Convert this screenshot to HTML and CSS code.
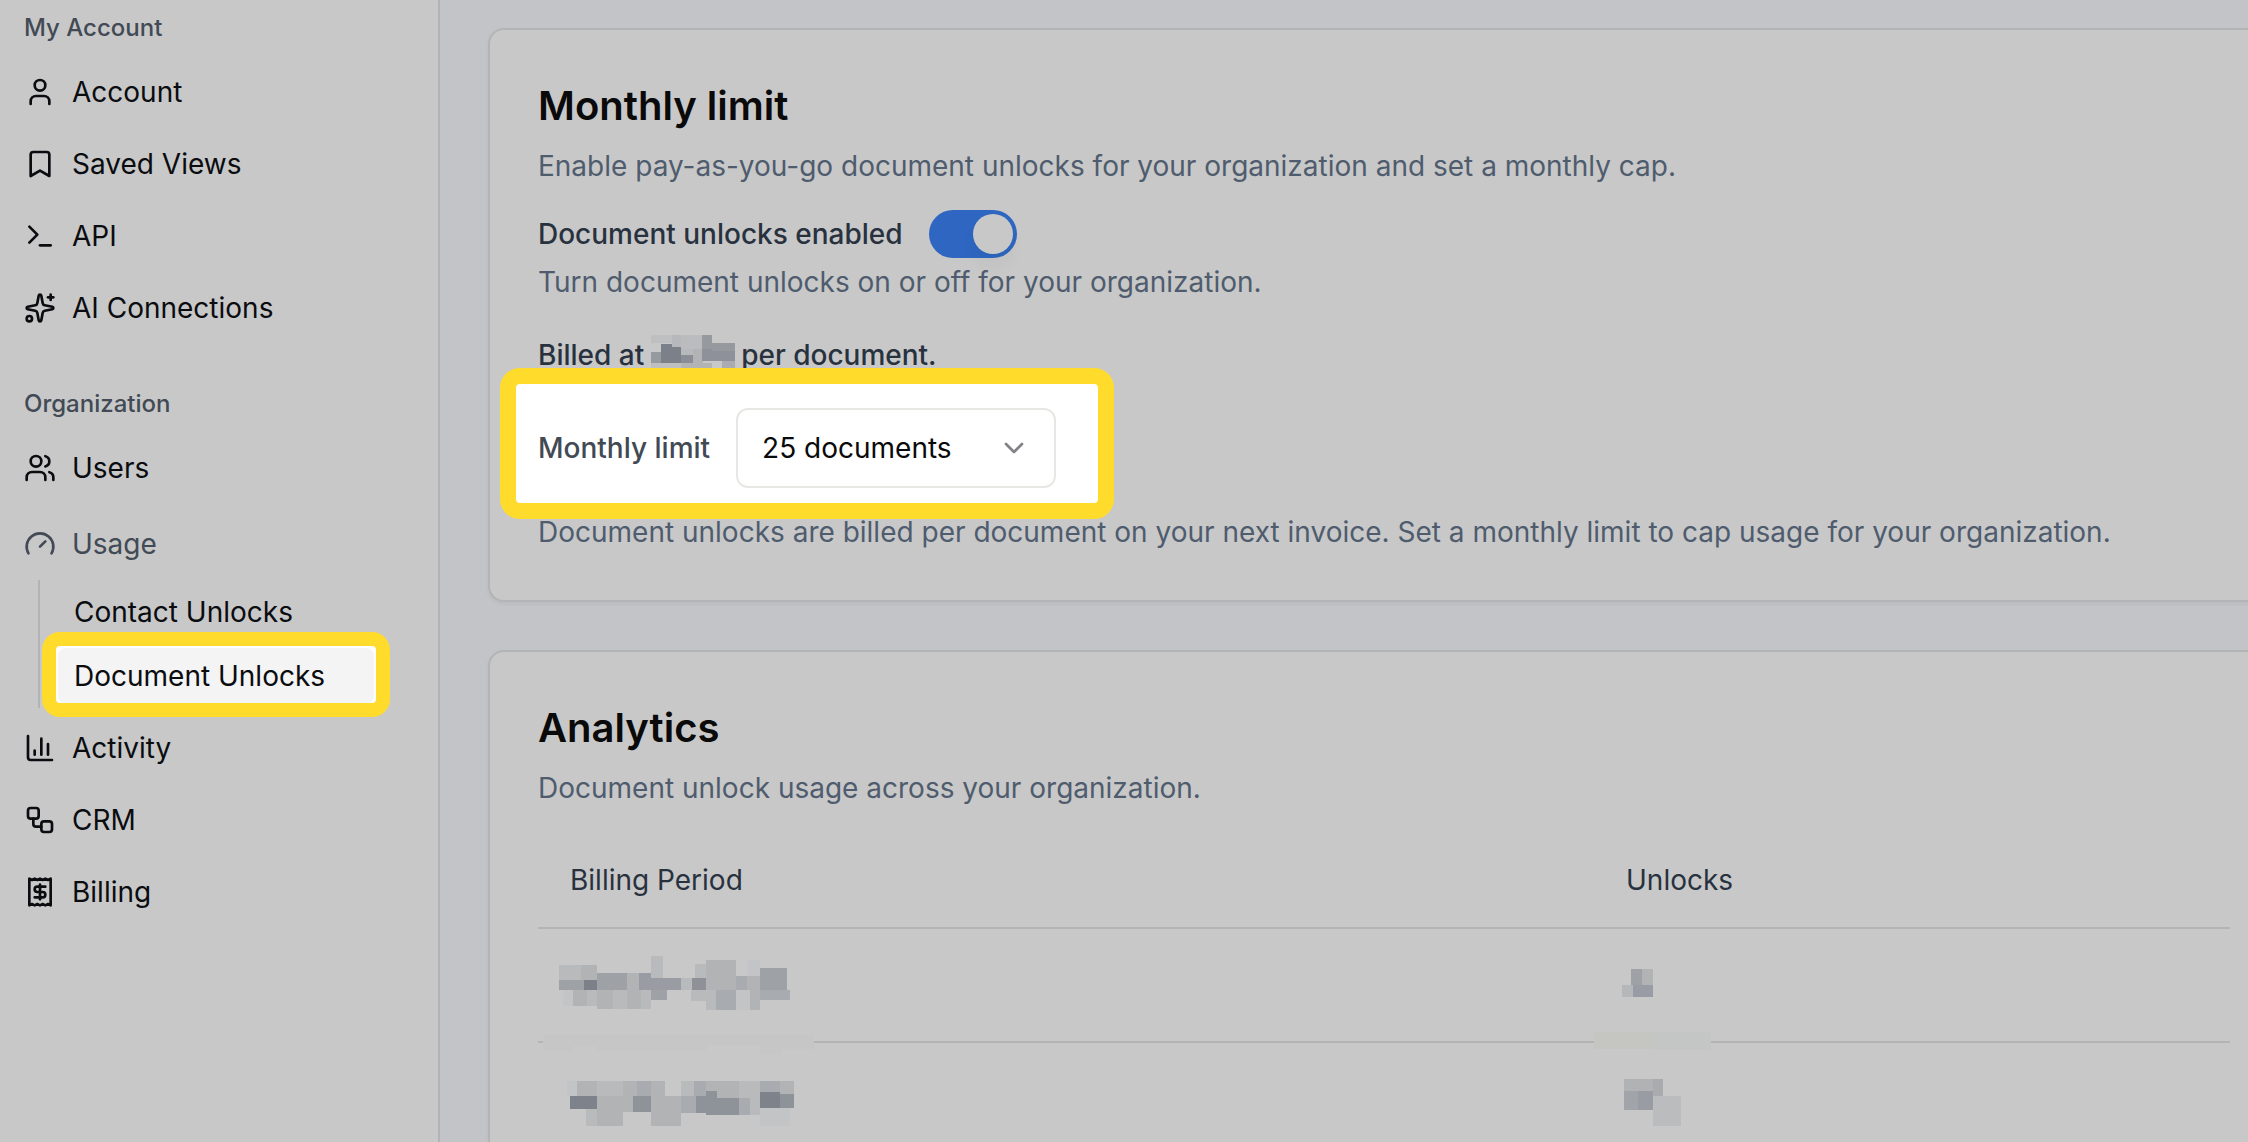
FILE: index.html
```html
<!DOCTYPE html>
<html lang="en">
<head>
    <meta charset="UTF-8">
    <meta name="viewport" content="width=device-width, initial-scale=1.0">
    <title>Document Unlocks</title>
    <link rel="stylesheet" href="styles.css">
</head>
<body>
    <div class="layout">
        <nav class="sidebar">
            <div class="group">
                <h2 class="group-label">My Account</h2>
                <ul class="menu">
                    <li><a class="item" href="#account">
                        <svg class="icon" viewBox="0 0 24 24"><circle cx="12" cy="7" r="4"/><path d="M19 21v-2a4 4 0 0 0-4-4H9a4 4 0 0 0-4 4v2"/></svg>
                        Account
                    </a></li>
                    <li><a class="item" href="#views">
                        <svg class="icon" viewBox="0 0 24 24"><path d="m19 21-7-4-7 4V5a2 2 0 0 1 2-2h10a2 2 0 0 1 2 2z"/></svg>
                        Saved Views
                    </a></li>
                    <li><a class="item" href="#api">
                        <svg class="icon" viewBox="0 0 24 24"><path d="m4 17 6-6-6-6"/><path d="M12 19h8"/></svg>
                        API
                    </a></li>
                    <li><a class="item" href="#ai">
                        <svg class="icon" viewBox="0 0 24 24"><path d="M11.017 2.814a1 1 0 0 1 1.966 0l1.051 5.558a2 2 0 0 0 1.594 1.594l5.558 1.051a1 1 0 0 1 0 1.966l-5.558 1.051a2 2 0 0 0-1.594 1.594l-1.051 5.558a1 1 0 0 1-1.966 0l-1.051-5.558a2 2 0 0 0-1.594-1.594l-5.558-1.051a1 1 0 0 1 0-1.966l5.558-1.051a2 2 0 0 0 1.594-1.594z"/><path d="M20 2v4"/><path d="M22 4h-4"/><circle cx="4" cy="20" r="2"/></svg>
                        AI Connections
                    </a></li>
                </ul>
            </div>
            <div class="group">
                <h2 class="group-label">Organization</h2>
                <ul class="menu">
                    <li><a class="item" href="#users">
                        <svg class="icon" viewBox="0 0 24 24"><path d="M16 21v-2a4 4 0 0 0-4-4H6a4 4 0 0 0-4 4v2"/><path d="M16 3.128a4 4 0 0 1 0 7.744"/><path d="M22 21v-2a4 4 0 0 0-3-3.87"/><circle cx="9" cy="7" r="4"/></svg>
                        Users
                    </a></li>
                    <li>
                        <div class="item item-parent">
                            <svg class="icon" viewBox="0 0 24 24"><path d="m12 14 4-4"/><path d="M3.34 19a10 10 0 1 1 17.32 0"/></svg>
                            Usage
                        </div>
                        <ul class="submenu">
                            <li><a class="subitem" href="#contacts">Contact Unlocks</a></li>
                            <li><a class="subitem active" href="#documents" aria-current="page">Document Unlocks</a></li>
                        </ul>
                    </li>
                    <li><a class="item" href="#activity">
                        <svg class="icon" viewBox="0 0 24 24"><path d="M3 3v16a2 2 0 0 0 2 2h16"/><path d="M18 17V9"/><path d="M13 17V5"/><path d="M8 17v-3"/></svg>
                        Activity
                    </a></li>
                    <li><a class="item" href="#crm">
                        <svg class="icon" viewBox="0 0 24 24"><rect x="3" y="3" width="8" height="8" rx="2"/><path d="M7 11v4a2 2 0 0 0 2 2h4"/><rect x="13" y="13" width="8" height="8" rx="2"/></svg>
                        CRM
                    </a></li>
                    <li><a class="item" href="#billing">
                        <svg class="icon" viewBox="0 0 24 24"><path d="M4 2v20l2-1 2 1 2-1 2 1 2-1 2 1 2-1 2 1V2l-2 1-2-1-2 1-2-1-2 1-2-1-2 1Z"/><path d="M16 8h-6a2 2 0 1 0 0 4h4a2 2 0 1 1 0 4H8"/><path d="M12 17.5v-11"/></svg>
                        Billing
                    </a></li>
                </ul>
            </div>
        </nav>

        <main class="content">
            <section class="card">
                <h1 class="card-title">Monthly limit</h1>
                <p class="muted card-desc">Enable pay-as-you-go document unlocks for your organization and set a monthly cap.</p>
                <div class="switch-row">
                    <label class="strong" for="unlocks">Document unlocks enabled</label>
                    <input class="switch" type="checkbox" role="switch" id="unlocks" checked>
                </div>
                <p class="muted switch-help">Turn document unlocks on or off for your organization.</p>
                <p class="strong billed">Billed at
                    <svg class="price-mask" viewBox="93 30 252 120" aria-hidden="true">
                        <path fill="#bdbfc0" d="M93 30h63v24H93zM93 114h93v36H93z"/>
                        <path fill="#b6b8bb" d="M156 30h90v60h-63V66h-27zM183 90h63v60h-63z"/>
                        <path fill="#bbbcbe" d="M183 30h63v42h-63z"/>
                        <path fill="#b1b3b5" d="M219 72h30v42h-30zM186 114h90v36h-90z"/>
                        <path fill="#969a9f" d="M93 81h30v33H93zM246 30h30v42h-30zM276 54h69v24h-69z"/>
                        <path fill="#7c8088" d="M123 57h33v9h27v48h-60z"/>
                        <path fill="#898d95" d="M183 90h36v24h-36z"/>
                        <path fill="#8e919a" d="M246 72h30v6h69v30h-99z"/>
                        <path fill="#a9acb0" d="M306 108h39v42h-39z"/>
                    </svg>
                    per document.</p>
                <div class="limit-row">
                    <label class="limit-label" for="limit">Monthly limit</label>
                    <div class="select-wrap">
                        <select class="select" id="limit">
                            <option>25 documents</option>
                            <option>50 documents</option>
                            <option>100 documents</option>
                        </select>
                        <svg class="icon chevron" viewBox="0 0 24 24"><path d="m6 9 6 6 6-6"/></svg>
                    </div>
                </div>
                <p class="muted limit-help">Document unlocks are billed per document on your next invoice. Set a monthly limit to cap usage for your organization.</p>
            </section>

            <section class="card">
                <h1 class="card-title">Analytics</h1>
                <p class="muted card-desc">Document unlock usage across your organization.</p>
                <table class="table">
                    <thead>
                        <tr>
                            <th class="col-period">Billing Period</th>
                            <th>Unlocks</th>
                        </tr>
                    </thead>
                    <tbody>
                        <tr>
                            <td>
                                <svg class="mask" viewBox="-6 -3 900 390" aria-hidden="true">
                                    <path fill="#c5c6c5" d="M9 315h813v42h-97v15h-65v-27H498v18H171v-15H99v15H9z"/>
                                    <path fill="#c2c4c6" d="M69 180h30v48H69zM621 90h39v48h-39zM588 180h42v60h-42z"/>
                                    <path fill="#b9babc" d="M57 105h66v45H57zM141 180h30v48h-30zM219 180h42v57h-42zM303 180h30v57h-30zM333 78h36v66h-36zM423 144h33v36h-33zM465 102h33v42h-33zM453 180h45v33h-45zM498 180h30v60h-30z"/>
                                    <path fill="#b1b3b5" d="M123 105h48v45h-48zM99 180h42v48H99zM171 180h48v57h-48zM261 180h42v57h-42zM261 129h36v51h-36zM498 90h90v90h-90zM621 138h39v42h-39zM630 180h30v60h-30z"/>
                                    <path fill="#a8abaf" d="M588 138h33v42h-33zM528 180h60v60h-60zM660 180h90v30h-90z"/>
                                    <path fill="#9ea2a7" d="M57 150h75v30H57zM171 129h90v51h-90zM333 180h48v30h-48zM660 114h81v66h-81z"/>
                                    <path fill="#999ca2" d="M297 129h36v15h90v36H297z"/>
                                    <path fill="#8e9197" d="M456 144h42v36h-42z"/>
                                    <path fill="#7c8088" d="M132 150h39v30h-39z"/>
                                </svg>
                            </td>
                            <td>
                                <svg class="mask" viewBox="99 -3 900 390" aria-hidden="true">
                                    <path fill="#c5c5c2" d="M99 306h177v51H99z"/>
                                    <path fill="#c4c5c5" d="M276 306h174v54H276z"/>
                                    <path fill="#b6b7b9" d="M183 165h33v36h-33z"/>
                                    <path fill="#b1b3b5" d="M243 117h33v48h-33z"/>
                                    <path fill="#9ea2a7" d="M210 117h33v48h-33z"/>
                                    <path fill="#999ca4" d="M216 165h60v36h-60z"/>
                                </svg>
                            </td>
                        </tr>
                        <tr>
                            <td>
                                <svg class="mask" viewBox="-6 339 900 390" aria-hidden="true">
                                    <path fill="#c2c4c5" d="M81 453h30v45H81zM660 534h90v54h-90z"/>
                                    <path fill="#b9babc" d="M138 537h33v51h-33zM171 453h78v45h-78zM423 453h39v45h-39zM597 453h63v102h-63z"/>
                                    <path fill="#b1b3b5" d="M111 453h60v45h-60zM171 498h78v90h-78zM249 453h42v93h-42zM333 453h42v45h-42zM333 498h90v90h-90zM498 453h99v51h-99zM720 453h42v39h-42z"/>
                                    <path fill="#a8abaf" d="M291 453h42v45h-42zM462 453h36v45h-36zM423 498h45v51h-45zM597 504h33v51h-33zM660 453h60v33h-60z"/>
                                    <path fill="#8e9299" d="M279 498h54v48h-54zM468 498h30v-15h33v21h66v51h-99v-6h-30zM720 492h42v42h-42z"/>
                                    <path fill="#7e828a" d="M90 498h81v39H90zM660 486h60v48h-60z"/>
                                </svg>
                            </td>
                            <td>
                                <svg class="mask" viewBox="99 339 900 390" aria-hidden="true">
                                    <path fill="#bbbcbe" d="M276 498h84v90h-84z"/>
                                    <path fill="#b0b2b4" d="M189 447h87v36h-87z"/>
                                    <path fill="#a9acaf" d="M276 447h30v51h-30z"/>
                                    <path fill="#a1a5a9" d="M189 483h42v57h-42z"/>
                                    <path fill="#999da3" d="M231 483h45v57h-45z"/>
                                </svg>
                            </td>
                        </tr>
                    </tbody>
                </table>
            </section>
        </main>
    </div>
</body>
</html>
```

FILE: styles.css
```css
* {
    box-sizing: border-box;
}
body {
    margin: 0;
    height: 100vh;
    overflow: hidden;
    background: #c3c4c7;
    color: #0a0c10;
    font-family: Inter, "Liberation Sans", sans-serif;
    font-size: 28px;
    line-height: 40px;
}
h1, h2, p, ul {
    margin: 0;
    padding: 0;
}
ul {
    list-style: none;
}
.layout {
    display: flex;
    min-height: 100vh;
}

/* Sidebar */
.sidebar {
    flex: 0 0 440px;
    display: flex;
    flex-direction: column;
    gap: 48px;
    padding: 12px 0;
    background: #c8c8c8;
    border-right: 2px solid #b2b3b6;
}
.group-label {
    margin-bottom: 16px;
    padding-left: 24px;
    color: #414a55;
    font-size: 24px;
    font-weight: 500;
    line-height: 32px;
}
.menu {
    display: flex;
    flex-direction: column;
    gap: 8px;
}
.item {
    display: flex;
    align-items: center;
    gap: 16px;
    height: 64px;
    padding: 0 24px;
    color: inherit;
    text-decoration: none;
}
.item-parent {
    height: 72px;
    color: #414a55;
}
.icon {
    width: 32px;
    height: 32px;
    flex-shrink: 0;
    fill: none;
    stroke: currentColor;
    stroke-width: 2;
    stroke-linecap: round;
    stroke-linejoin: round;
}
.submenu {
    display: flex;
    flex-direction: column;
    gap: 8px;
    margin: 0 64px 0 38px;
    padding: 4px 0 4px 18px;
    border-left: 2px solid #b2b3b6;
}
.subitem {
    display: block;
    padding: 8px 16px;
    border-radius: 8px;
    color: inherit;
    text-decoration: none;
}
.active {
    position: relative;
    background: #f4f4f4;
}
.active::before {
    content: "";
    position: absolute;
    z-index: -1;
    inset: -2px;
    background: #fff;
}
.submenu li {
    position: relative;
    z-index: 0;
}
.active::after {
    content: "";
    position: absolute;
    inset: -16px -16px -13px;
    border: 14px solid #ffdb2c;
    border-radius: 18px;
}

/* Content, wider than the window on the right */
.content {
    flex: 1;
    display: flex;
    flex-direction: column;
    gap: 48px;
    margin-right: -32px;
    padding: 28px 0 0 48px;
}
.card {
    padding: 48px;
    background: #c8c8c8;
    border: 2px solid #b2b4b6;
    border-radius: 16px;
    box-shadow: 0 2px 4px rgba(0, 0, 0, 0.05);
}
.card-title {
    margin-bottom: 12px;
    color: #0a0a0a;
    font-size: 40px;
    font-weight: 600;
    line-height: 56px;
}
.muted {
    color: #4f5c6e;
}
.strong {
    color: #28323f;
    font-weight: 500;
}
.switch-row {
    display: flex;
    align-items: center;
    gap: 26px;
    margin: 24px 0 4px;
}
.switch {
    appearance: none;
    width: 88px;
    height: 48px;
    margin: 0;
    padding: 4px;
    background: #a5a9af;
    border-radius: 24px;
    cursor: pointer;
}
.switch::before {
    content: "";
    display: block;
    width: 40px;
    height: 40px;
    background: #c8c8c8;
    border-radius: 50%;
    box-shadow: 0 12px 16px rgba(0, 0, 0, 0.04);
}
.switch:checked {
    background: #2e66c1;
}
.switch:checked::before {
    margin-left: auto;
}
.billed {
    margin: 33px 0;
}
.price-mask {
    width: 84px;
    height: 40px;
    margin: 0 -1px;
    vertical-align: top;
}
.limit-row {
    position: relative;
    z-index: 0;
    display: flex;
    align-items: center;
    gap: 26px;
    width: fit-content;
}
.limit-row::before {
    content: "";
    position: absolute;
    z-index: -1;
    inset: -40px -58px -31px -38px;
    background: #fff;
    border: 16px solid #ffdb2c;
    border-radius: 20px;
}
.limit-label {
    color: #414a55;
    font-weight: 500;
}
.select-wrap {
    position: relative;
    width: 320px;
}
.select {
    appearance: none;
    display: block;
    width: 100%;
    height: 80px;
    padding: 0 24px;
    background: #fff;
    border: 2px solid #e7e7e3;
    border-radius: 12px;
    color: #0a0a0a;
    font: inherit;
}
.chevron {
    position: absolute;
    top: 24px;
    right: 26px;
    color: #808285;
    pointer-events: none;
}
.limit-help {
    margin-top: 24px;
}

/* Usage table */
.table {
    width: 100%;
    margin-top: 24px;
    border-collapse: separate;
    border-spacing: 0;
}
.table th {
    height: 97px;
    padding: 0 32px;
    border-bottom: 2px solid #b2b4b6;
    color: #28323f;
    font-weight: 400;
    text-align: left;
}
.table td {
    position: relative;
    height: 114px;
    padding: 0;
    border-bottom: 2px solid #b2b4b6;
}
.table .col-period {
    width: 1056px;
}
.mask {
    position: absolute;
    top: 0;
    left: 0;
    width: 300px;
    height: 130px;
}
```
